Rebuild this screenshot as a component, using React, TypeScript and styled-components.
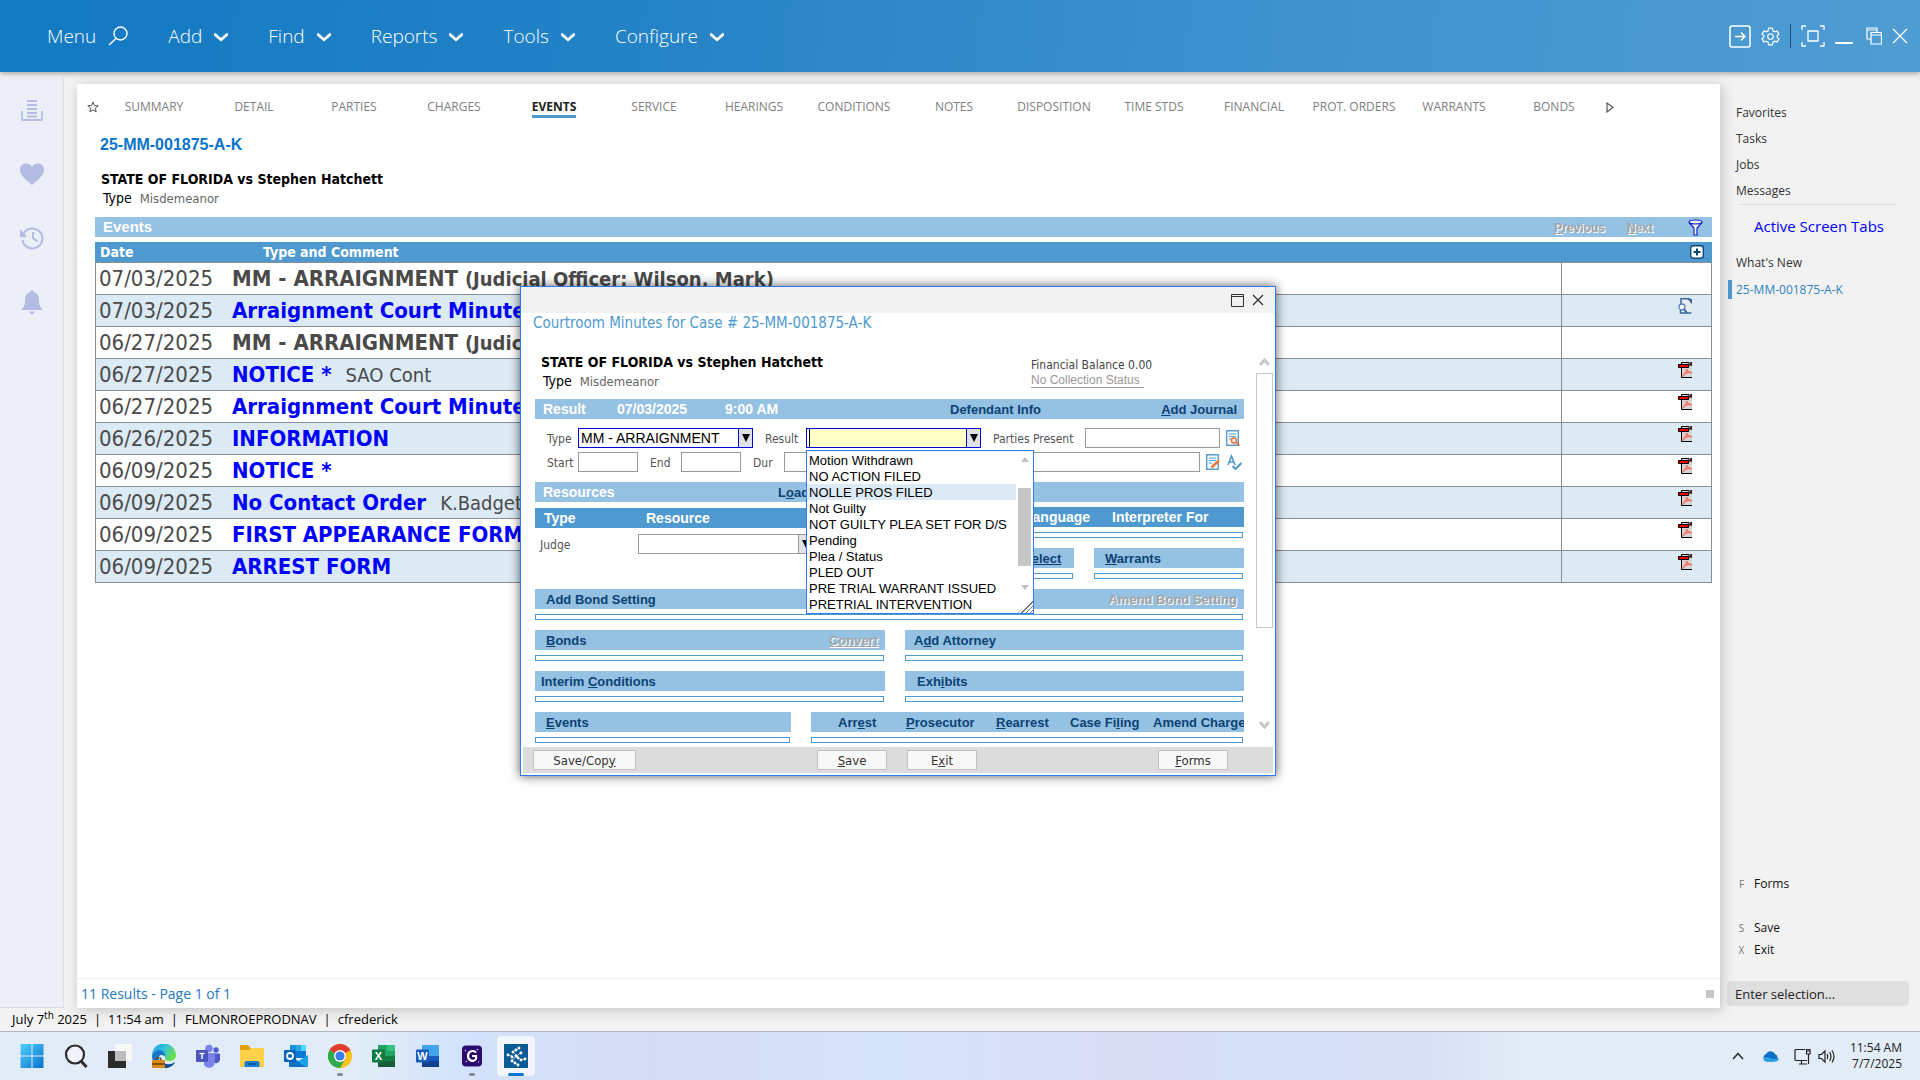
import React from "react";
import styled, { createGlobalStyle, css } from "styled-components";

const ui = `"Open Sans", "Noto Sans", sans-serif`;
const tahoma = `"DejaVu Sans Condensed", "DejaVu Sans", sans-serif`;
const arial = `"Liberation Sans", Arial, sans-serif`;

const GlobalStyle = createGlobalStyle`
  *, *::before, *::after { box-sizing: border-box; }
  body { margin: 0; background: #f2f2f2; font-family: ${ui}; font-size: 13px; color: #000; }
  button, input, select { font: inherit; margin: 0; border-radius: 0; }
  a { color: inherit; }
`;

/* ---------- shell ---------- */
const Shell = styled.div`
  min-height: 100vh;
  display: grid;
  grid-template-rows: 72px 1fr 24px 48px;
`;
const PlainButton = styled.button`
  display: inline-flex;
  align-items: center;
  justify-content: center;
  padding: 0;
  border: 0;
  background: none;
  color: inherit;
  cursor: pointer;
`;

/* ---------- top bar ---------- */
const TopBar = styled.header`
  position: relative;
  z-index: 1;
  display: flex;
  align-items: center;
  justify-content: space-between;
  padding: 0 12px 0 47px;
  color: #fff;
  background: linear-gradient(97deg, #1279c3 0%, #2583c7 35%, #2f88c9 45%, #4395d0 75%, #4f9cd2 100%);
  box-shadow: 0 2px 5px rgba(0, 0, 0, 0.3);
`;
const Nav = styled.nav`
  display: flex;
  gap: 40px;
`;
const NavItem = styled(PlainButton)`
  gap: 12px;
  font-size: 19px;
  font-weight: 300;
  line-height: 26px;
`;
const WindowTools = styled.div`
  display: flex;
  align-items: center;
  gap: 10px;
`;
const Divider = styled.span`
  width: 1px;
  height: 24px;
  background: #14548a;
`;

/* ---------- body ---------- */
const Body = styled.div`
  display: grid;
  grid-template-columns: 64px 1fr 200px;
`;
const Rail = styled.aside`
  margin-top: 6px;
  padding-top: 20px;
  display: flex;
  flex-direction: column;
  align-items: center;
  gap: 40px;
  background: #eceef8;
  border-right: 1px solid #dcdde2;
  border-bottom: 1px solid #dcdde2;
  color: #b5bce3;
`;
const Panel = styled.main`
  position: relative;
  display: flex;
  flex-direction: column;
  margin: 12px 0 0 13px;
  background: #fff;
  box-shadow: 2px 2px 12px rgba(0, 0, 0, 0.2);
`;
const Tabs = styled.nav`
  display: flex;
  align-items: center;
  height: 46px;
  padding-left: 4px;
  color: #808080;
`;
const TabEdge = styled(PlainButton)<{ $end?: boolean }>`
  width: ${(p) => (p.$end ? 12 : 23)}px;
  color: #555;
`;
const TabList = styled.div`
  display: flex;
  flex: 0 1 1500px;
`;
const Tab = styled(PlainButton)<{ $on?: boolean }>`
  flex: 1 1 0;
  min-width: 0;
  font-size: 12px;
  line-height: 16px;
  white-space: nowrap;
  font-weight: ${(p) => (p.$on ? 700 : 400)};
  color: ${(p) => (p.$on ? "#222" : "#808080")};
  span { border-bottom: 3px solid ${(p) => (p.$on ? "#4e9ad0" : "transparent")}; margin-top: 2px; }
`;
const CaseNumber = styled.h1`
  margin: 5px 0 0;
  padding-left: 23px;
  font: bold 16px/20px ${arial};
  color: #0a74cc;
`;
const Parties = styled.div<{ $pad: string }>`
  padding: ${(p) => p.$pad};
  font-family: ${tahoma};
  h2 { margin: 0; font: bold 14px/20px ${tahoma}; }
  p { margin: 0; padding-left: 2px; font-size: 14px; line-height: 18px; }
  p span { margin-left: 4px; font-size: 13px; color: #666; }
`;
const EventsBar = styled.div`
  display: flex;
  align-items: center;
  height: 20px;
  margin: 9px 8px 5px 18px;
  padding: 0 9px 0 8px;
  background: #95c1e2;
  color: #fff;
  h3 { flex: 1; margin: 0; font: bold 15px/20px ${arial}; }
`;
const Disabled = styled.a<{ $small?: boolean }>`
  font: bold ${(p) => (p.$small ? 12 : 13)}px/22px ${arial};
  color: #a5a5a5;
  text-decoration: none;
  text-shadow: 1px 1px 0 #fff;
`;
const Pager = styled.div`
  display: flex;
  gap: 22px;
  margin-right: 35px;
  height: 20px;
`;
const EventTable = styled.table`
  margin: 0 8px 0 18px;
  border-collapse: separate;
  border-spacing: 0;
  table-layout: fixed;
  font: 22px/28px ${tahoma};
  color: #4a4a4a;
  th {
    height: 21px;
    padding: 0 5px;
    background: #4e9ad0;
    border-bottom: 1px solid #8a8d92;
    font: bold 14px/20px ${tahoma};
    color: #fff;
    text-align: left;
  }
  th:nth-child(2) { padding-left: 35px; }
  th:last-child { text-align: right; line-height: 0; padding-right: 8px; }
  td {
    height: 32px;
    padding: 0 4px;
    border-bottom: 1px solid #8a8d92;
    white-space: nowrap;
  }
  td:nth-child(1) { border-left: 1px solid #8a8d92; padding-left: 3px; }
  td:nth-child(3) {
    border-left: 1px solid #8a8d92;
    border-right: 1px solid #8a8d92;
    vertical-align: top;
    text-align: right;
    line-height: 0;
    padding: 3px 19px 0 0;
  }
  tbody tr:nth-child(even) { background: #dceaf5; }
  b a { color: #0000ff; text-decoration: none; }
  b small { font-size: 20px; }
  td > span { margin-left: 14px; font-size: 20px; }
`;
const PanelFoot = styled.footer`
  display: flex;
  align-items: center;
  justify-content: space-between;
  height: 30px;
  margin-top: auto;
  padding: 0 6px 0 4px;
  border-top: 1px solid #efefef;
  font-size: 14px;
  color: #1e78c2;
`;
const Square = styled.span`
  width: 8px;
  height: 8px;
  background: #c6c6c6;
`;

/* ---------- right side ---------- */
const Side = styled.aside`
  display: flex;
  flex-direction: column;
  padding: 28px 11px 2px 7px;
  line-height: 26px;
  font-size: 12px;
  color: #333;
`;
const SideLink = styled.a<{ $on?: boolean }>`
  display: flex;
  align-items: center;
  height: 26px;
  padding-left: 9px;
  text-decoration: none;
  color: ${(p) => (p.$on ? "#2f83c5" : "#333")};
  ${(p) => p.$on && css`
    height: 19px;
    margin: 4px 0 0 1px;
    padding-left: 4px;
    border-left: 4px solid #4e9ad0;
  `}
`;
const SideTitle = styled.h2`
  margin: 0 12px 0 13px;
  padding: 7px 0 10px 14px;
  border-top: 1px solid #dedede;
  font: 15px/28px ${ui};
  color: #0000ff;
  white-space: nowrap;
`;
const Shortcut = styled(PlainButton)<{ $gap?: boolean }>`
  justify-content: flex-start;
  gap: 9px;
  height: 22px;
  padding-left: 11px;
  margin-bottom: ${(p) => (p.$gap ? "22px" : "0")};
  color: #111;
  kbd { width: 7px; font: 10px ${ui}; color: #777; }
`;
const Spacer = styled.div`
  flex: 1;
`;
const Selection = styled.input`
  width: 100%;
  height: 25px;
  margin: 20px 0 0;
  padding: 0 8px;
  border: 0;
  border-radius: 4px;
  background: #dfdfdf;
  font-size: 13px;
  &::placeholder { color: #222; opacity: 1; }
`;

/* ---------- status and task bars ---------- */
const Status = styled.div`
  display: flex;
  align-items: center;
  gap: 7px;
  padding: 0 0 2px 12px;
  font-size: 13px;
  line-height: 18px;
  border-bottom: 1px solid #adb8c4;
  sup { font-size: 10px; line-height: 0; }
`;
const TaskBar = styled.footer`
  display: flex;
  align-items: center;
  justify-content: space-between;
  padding: 0 18px 0 13px;
  background: linear-gradient(90deg, #e2ecf7 0%, #e0ecf8 19%, #d3e3fb 24%, #d6dbf6 35%, #d5e4fb 46%, #d9dcf4 60%, #d3e1f9 66%, #d9dff4 74%, #e0ecf7 79%, #e3edf7 100%);
`;
const Apps = styled.div`
  display: flex;
  gap: 6px;
`;
const AppButton = styled(PlainButton)<{ $state?: "open" | "active" }>`
  width: 38px;
  height: 40px;
  border-radius: 4px;
  flex-direction: column;
  padding-top: 8px;
  justify-content: flex-start;
  background: ${(p) => (p.$state === "active" ? "#f2f5fc" : "none")};
  svg { flex: none; margin-bottom: 5px; }
  &::after {
    content: "";
    width: ${(p) => (p.$state === "active" ? 16 : 6)}px;
    height: 3px;
    border-radius: 2px;
    background: ${(p) => (p.$state === "active" ? "#0a78d4" : p.$state ? "#868a92" : "transparent")};
  }
`;
const Tray = styled.div`
  display: flex;
  align-items: center;
  font-size: 12px;
  line-height: 16px;
  color: #222;
`;
const TrayIcon = styled(PlainButton)<{ $gap: number }>`
  margin-right: ${(p) => p.$gap}px;
`;
const Clock = styled.time`
  text-align: right;
`;

/* ---------- dialog ---------- */
const Overlay = styled.div`
  position: absolute;
  inset: 202px 1px auto 0;
  display: flex;
  justify-content: center;
`;
const Dialog = styled.section`
  width: 756px;
  background: #fff;
  border: 1px solid #2f7af0;
  box-shadow: 0 0 10px rgba(0, 0, 0, 0.65);
`;
const DialogTop = styled.div`
  display: flex;
  justify-content: flex-end;
  align-items: center;
  gap: 8px;
  height: 26px;
  padding-right: 11px;
  background: #f2f2f2;
  color: #333;
`;
const DialogBody = styled.div`
  display: flex;
  height: 434px;
  padding: 0 2px 0 14px;
`;
const Scroll = styled.div`
  flex: 1;
  min-width: 0;
  margin-right: 12px;
`;
const DialogTitle = styled.h2`
  margin: 0 0 0 -2px;
  font: 15px/20px ${tahoma};
  color: #4e9ad0;
`;
const DialogHead = styled.div`
  display: flex;
  justify-content: space-between;
  height: 66px;
`;
const Balance = styled.div`
  width: 213px;
  padding-top: 25px;
  font: 12px/15px ${tahoma};
  color: #444;
  a { display: inline-block; line-height: 13px; font-family: ${arial}; color: #999; text-decoration: none; border-bottom: 1px solid #999; padding-right: 4px; }
`;
const Bar = styled.div<{ $cols?: string; $dark?: boolean; $pad?: number; $size?: number }>`
  display: grid;
  grid-template-columns: ${(p) => p.$cols || "1fr auto"};
  height: 20px;
  padding-left: ${(p) => p.$pad ?? 11}px;
  padding-right: 7px;
  overflow: hidden;
  white-space: nowrap;
  background: ${(p) => (p.$dark ? "#4e9ad0" : "#95c1e2")};
  color: #fff;
  font: bold ${(p) => p.$size ?? 14}px/21px ${arial};
`;
const Action = styled.a`
  font-size: 13px;
  line-height: 22px;
  color: #0b4274;
  text-decoration: none;
`;
const EmptyGrid = styled.div`
  height: 6px;
  margin: 5px 1px 0 0;
  border: 1px solid #4e9ad0;
`;
const Form = styled.div`
  display: grid;
  gap: 4px;
  margin: 9px 0 10px;
`;
const Line = styled.div<{ $cols: string }>`
  display: grid;
  align-items: center;
  grid-template-columns: ${(p) => p.$cols};
  height: 20px;
`;
const Label = styled.label`
  padding: 2px 0 0 12px;
  font: 12px/18px ${tahoma};
  color: #555;
  white-space: nowrap;
`;
const Input = styled.input`
  width: 100%;
  height: 20px;
  padding: 0 3px;
  border: 1px solid #999;
  background: #fff;
`;
const Combo = styled.div<{ $hot?: boolean }>`
  position: relative;
  display: grid;
  grid-template-columns: 1fr 14px;
  height: 20px;
  border: 1px solid ${(p) => (p.$hot ? "#0000d8" : "#999")};
  background: #fff;
  select, input {
    appearance: none;
    width: 100%;
    min-width: 0;
    height: 18px;
    padding: 1px 2px 0;
    border: 0;
    outline: 0;
    background: #fff;
    font: 14px/17px ${arial};
    color: #000;
  }
`;
const Arrow = styled.button<{ $hot?: boolean }>`
  display: flex;
  align-items: center;
  justify-content: center;
  padding: 0;
  border: 0;
  border-left: 1px solid ${(p) => (p.$hot ? "#0000d8" : "#999")};
  background: #e1e2e8;
`;
const ResultInput = styled.input`
  && {
    background: #ffffc8;
    border-left: 2px solid #fff;
    box-shadow: inset 1px 0 0 #000;
  }
`;
const ListBox = styled.div`
  position: absolute;
  z-index: 2;
  top: 21px;
  left: -1px;
  width: 228px;
  height: 164px;
  display: flex;
  padding-top: 1px;
  background: #fff;
  border: 1px solid #2f7af0;
  ul { flex: 1; min-width: 0; margin: 0; padding: 0; list-style: none; }
`;
const Option = styled.li<{ $on?: boolean }>`
  height: 16px;
  padding-left: 2px;
  font: 13px/17px ${arial};
  white-space: nowrap;
  background: ${(p) => (p.$on ? "#dceaf5" : "none")};
`;
const ListScroll = styled.div`
  display: grid;
  grid-template-rows: 36px 78px 1fr;
  justify-items: center;
  width: 13px;
  margin: 0 2px;
  i { width: 13px; background: #c6c6c6; }
  svg { margin-top: 5px; }
  svg:last-child { margin-top: 19px; }
`;
const Grip = styled.span`
  position: absolute;
  right: 0;
  bottom: 0;
  width: 15px;
  height: 14px;
  background: repeating-linear-gradient(135deg, #777 0 1px, #fff 1px 3px);
  clip-path: polygon(100% 0, 100% 100%, 0 100%);
`;
const Split = styled.div<{ $cols: string; $gap?: number }>`
  display: grid;
  grid-template-columns: ${(p) => p.$cols};
  gap: ${(p) => p.$gap ?? 20}px;
  margin-bottom: 10px;
`;
const JudgeBlock = styled.div`
  display: grid;
  gap: 6px;
  align-content: start;
`;
const Column = styled.div`
  display: grid;
  align-content: start;
`;
const LanguageBlock = styled(Column)`
  margin: 5px 0 10px;
`;
const Subsections = styled.div`
  display: grid;
  grid-template-columns: 1fr 150px;
  gap: 20px;
`;
const ScrollBar = styled.div`
  display: flex;
  flex-direction: column;
  align-items: center;
  width: 17px;
  padding: 45px 0 18px;
`;
const Thumb = styled.span`
  width: 17px;
  height: 255px;
  margin: 7px 0 auto;
  border: 1px solid #c8c8c8;
  background: #fff;
`;
const DialogFoot = styled.footer`
  display: grid;
  grid-template-columns: 103px 1fr 70px 70px 1fr 70px;
  column-gap: 20px;
  align-items: center;
  height: 26px;
  margin: 0 2px 2px;
  padding: 0 45px 0 10px;
  background: #dcdcdc;
`;
const FootButton = styled.button<{ $col?: number }>`
  grid-column: ${(p) => p.$col ?? "auto"};
  height: 20px;
  padding: 1px 0 0;
  border: 1px solid #c0c0c0;
  background: #f8f8f8;
  font: 13px/16px ${tahoma};
  color: #333;
`;

/* ---------- drawings ---------- */
const Svg = (p: { w: number; h: number; vb?: string; sw?: number; fill?: string; children: React.ReactNode }) => (
  <svg width={p.w} height={p.h} viewBox={p.vb || `0 0 ${p.w} ${p.h}`} fill={p.fill || "none"}
    stroke={p.sw ? "currentColor" : "none"} strokeWidth={p.sw} aria-hidden="true">{p.children}</svg>
);
const Chevron = () => <Svg w={14} h={12} fill="#fff"><path d="M0 3.500 1.500 3 7 8l5.500-5 1.500.5v2L7 11.500l-7-6z" /></Svg>;
const Down = () => <Svg w={8} h={8} fill="#000"><path d="M0 0h8L4 8z" /></Svg>;
const PdfIcon = () => (
  <svg width="14" height="16" viewBox="0 0 14 16" aria-hidden="true">
    <path d="M3 0h8l3 3v13H3z" fill="#d4d4d4" />
    <path d="M14 15.500H3.500V.5H11v2.500h3" fill="none" stroke="#000" />
    <path d="M12.500 0H14v3h-1.500z" fill="#d00" stroke="#000" strokeWidth=".6" />
    <path d="M.5 2.500h10v3H.5z" fill="#f00000" stroke="#000" />
    <path d="M8.500 7c.6 2 1.500 3.300 5.500 4M8.500 7c0 3-2 6-4.500 7M5.500 12c2.500-1.500 5-2 8.500-1.500" fill="none" stroke="#ff6a5a" strokeWidth="1.200" />
  </svg>
);
const MinutesIcon = () => (
  <svg width="14" height="16" viewBox="0 0 14 16" aria-hidden="true">
    <path d="M3 1h8l2 3v11H4z" fill="#e6ebf4" />
    <path d="M3 6V.8h8M10.500 1l3 3.500V2L11 .8M2.500 12v3h11" fill="none" stroke="#3f679c" strokeWidth="1.500" />
    <circle cx="4" cy="9" r="3" fill="#f4f7fb" stroke="#5c83b5" strokeWidth="1.300" />
    <path d="m6 11 3 4" stroke="#3f679c" strokeWidth="2" />
  </svg>
);
const NoteIcon = (p: { find?: boolean }) => (
  <svg width="15" height="16" viewBox="0 0 15 16" fill="none" aria-hidden="true">
    <path d="M1.700.7h11.600v14.600H1.700z" stroke="#5a9fd0" strokeWidth="1.400" fill="#f3f9fd" />
    <path d="M4 4h7M4 6.500h7M4 9h3" stroke="#5a9fd0" />
    {p.find ? <g stroke="#e8743c" strokeWidth="1.600"><circle cx="9" cy="10.500" r="2.500" fill="#fff" /><path d="m11 12 3.500 3.500" /></g>
      : <path d="m6.500 13.500 7.500-7" stroke="#e8743c" strokeWidth="2.400" />}
  </svg>
);

/* Text with its keyboard letter between underscores. */
const U = (p: { t: string }) => {
  const [a, k, b] = p.t.split("_");
  return k === undefined ? <>{a}</> : <span>{a}<u>{k}</u>{b}</span>;
};

const OfficeIcon = (p: { letter: string; dark: string; mid: string; light: string; low: string }) => (
  <svg width="24" height="24" viewBox="0 0 24 24" aria-hidden="true">
    <path d="M6 1h9v6H6z" fill={p.mid} /><path d="M15 1h8v6h-8z" fill={p.light} />
    <path d="M6 7h17v5H6z" fill={p.mid} /><path d="M6 12h17v5H6z" fill={p.dark} /><path d="M6 17h17v6H6z" fill={p.low} />
    <rect y="5.500" width="13" height="13" rx="1" fill={p.dark} />
    <text x="6.500" y="15.800" textAnchor="middle" fontFamily="Liberation Sans, sans-serif" fontWeight="700" fontSize="11" fill="#fff">{p.letter}</text>
  </svg>
);

const apps: { name: string; state?: "open" | "active"; icon: React.ReactNode }[] = [
  { name: "Start", icon: <svg width="24" height="24" viewBox="0 0 24 24"><defs><linearGradient id="win" x2="1" y2="1"><stop stopColor="#4fd0fb" /><stop offset="1" stopColor="#0a72cf" /></linearGradient></defs><path d="M.5 0h11v11.500H.5zM12.500 0h11v11.500h-11zM.5 12.500h11V24H.5zM12.500 12.500h11V24h-11z" fill="url(#win)" /></svg> },
  { name: "Search", icon: <svg width="24" height="24" viewBox="0 0 24 24" fill="none" stroke="#2b2b2b" strokeWidth="2.200"><circle cx="11" cy="10.500" r="9" fill="#eff4fb" /><path d="m17 17 5.500 6" strokeWidth="3" /></svg> },
  { name: "Task view", icon: <svg width="24" height="24" viewBox="0 0 24 24"><path d="M0 7h18v17H0z" fill="#2c2c2c" /><path d="M7 0h17v17H7z" fill="#f8f8f8" /><path d="M7 7h11v10H7z" fill="#bdbdbd" /></svg> },
  { name: "Edge", icon: <svg width="24" height="24" viewBox="0 0 24 24"><defs><linearGradient id="edge" x2="1" y2=".5"><stop stopColor="#1c8ee0" /><stop offset=".5" stopColor="#2fc3df" /><stop offset="1" stopColor="#6be04e" /></linearGradient></defs><path d="M0 12A12 12 0 0 1 24 11c0 4-3 6-7 6-3 0-4-1-4-3 1-5-3-8-7-8-3 0-5 2-6 6z" fill="url(#edge)" /><path d="M0 12c1-4 4-6 7-6 4 0 7 3 6 7-1-2-5-3-6 0-1 4 3 8 9 8 3 0 5-1 7-3-2 4-6 6-11 6C5 24 0 19 0 12z" fill="#1277c8" /><path d="M9 13c-1 5 4 8 9 7 2 0 3-1 5-2-2 4-6 6-11 6-4-2-6-7-3-11z" fill="#0c4f95" /><rect y="16" width="13" height="8" rx="1" fill="#d88a1a" /><path d="M0 19h13v2H0z" fill="#8a4f06" /><path d="M4 16v-2h5v2" stroke="#7a4506" fill="none" /></svg> },
  { name: "Teams", icon: <svg width="24" height="24" viewBox="0 0 24 24"><circle cx="13" cy="4.500" r="3.800" fill="#7b83eb" /><circle cx="20" cy="6" r="2.700" fill="#5059c9" /><path d="M8 9h11v8a6 6 0 0 1-11 4z" fill="#7b83eb" /><path d="M19 9.500h5V15a4 4 0 0 1-5 4z" fill="#5059c9" /><rect y="6" width="12" height="12" rx="1" fill="#4b53bc" /><path d="M3.500 9.500h5M6 9.500V15" stroke="#fff" strokeWidth="1.500" /></svg> },
  { name: "File Explorer", icon: <svg width="24" height="24" viewBox="0 0 24 24"><path d="M0 2q0-1 1-1h7l2.500 3H24v8H0z" fill="#e0a010" /><path d="M0 6h9l2-2h13v18q0 1-1 1H1q-1 0-1-1z" fill="#ffd04a" /><path d="M4.500 23v-4q0-2 2-2h11q2 0 2 2v4z" fill="#1b7fd0" /><path d="M8 20h8" stroke="#0d5294" strokeWidth="1.500" /></svg> },
  { name: "Outlook", icon: <svg width="24" height="24" viewBox="0 0 24 24"><path d="M6 1h16v13H6z" fill="#1490df" /><path d="M12 1h5v6h-5z" fill="#28a8ea" /><path d="M17 1h5v6h-5z" fill="#50d9ff" /><path d="M12 7h10v7H12z" fill="#0f78d4" /><path d="M5 11l9.500 6L24 11v11q0 1-1 1H6q-1 0-1-1z" fill="#1da2ea" /><path d="M5 12l17 11H6q-1 0-1-1z" fill="#1272c2" /><rect y="6" width="12" height="12" rx="1" fill="#0364b8" /><circle cx="6" cy="12" r="3" fill="none" stroke="#fff" strokeWidth="1.800" /></svg> },
  { name: "Chrome", state: "open", icon: <svg width="24" height="24" viewBox="0 0 24 24"><circle cx="12" cy="12" r="12" fill="#fbc116" /><path d="M12 12 1.600 6A12 12 0 0 1 22.400 6z" fill="#e33b2e" /><path d="M12 12 1.600 6A12 12 0 0 0 12 24l5.200-9z" fill="#2da94f" /><circle cx="12" cy="12" r="6" fill="#fff" /><circle cx="12" cy="12" r="4.600" fill="#3b7ded" /></svg> },
  { name: "Excel", icon: <OfficeIcon letter="X" dark="#107c41" mid="#21a366" light="#33c481" low="#185c37" /> },
  { name: "Word", icon: <OfficeIcon letter="W" dark="#185abd" mid="#41a5ee" light="#41a5ee" low="#103f91" /> },
  { name: "Capture", state: "open", icon: <svg width="24" height="24" viewBox="0 0 24 24"><rect x="2" y="1.500" width="20" height="21" rx="4" fill="#2c0a6e" /><path d="M16 8.500c-2-2.500-8-2-8 3.500s6 6 8 3v-3h-4" fill="none" stroke="#fff" strokeWidth="2.200" /><path d="M5 6l1 1M18 5l-1 1M6 18l1-1M18 18h1" stroke="#c9a6ff" strokeWidth="1.500" /></svg> },
  { name: "Court case manager", state: "active", icon: <svg width="24" height="24" viewBox="0 0 24 24"><path d="M0 0h24v24H0z" fill="#0a5a96" /><g stroke="#fff" strokeWidth=".7" fill="#fff"><path fill="none" d="M15 4 9 8l4 4 4-4M4 11l4 1M12 12l-4 5 6 4M13 12l4 4 4-1M17 8v2" />{[[15, 4], [12, 6], [9, 8], [17, 9], [12, 12], [4, 11], [8, 13], [8, 17], [11, 19], [14, 21], [17, 16], [21, 15], [14, 14]].map(([x, y]) => <circle key={`${x}-${y}`} cx={x} cy={y} r="1.400" stroke="none" />)}</g></svg> },
];

const tabs = ["SUMMARY", "DETAIL", "PARTIES", "CHARGES", "EVENTS", "SERVICE", "HEARINGS", "CONDITIONS", "NOTES", "DISPOSITION", "TIME STDS", "FINANCIAL", "PROT. ORDERS", "WARRANTS", "BONDS"];

const events: { date: string; title: string; officer?: string; note?: string; icon?: "pdf" | "minutes" }[] = [
  { date: "07/03/2025", title: "MM - ARRAIGNMENT", officer: "(Judicial Officer: Wilson, Mark)" },
  { date: "07/03/2025", title: "Arraignment Court Minutes", icon: "minutes" },
  { date: "06/27/2025", title: "MM - ARRAIGNMENT", officer: "(Judicial Officer: Wilson, Mark)" },
  { date: "06/27/2025", title: "NOTICE *", note: "SAO Cont", icon: "pdf" },
  { date: "06/27/2025", title: "Arraignment Court Minutes", icon: "pdf" },
  { date: "06/26/2025", title: "INFORMATION", icon: "pdf" },
  { date: "06/09/2025", title: "NOTICE *", icon: "pdf" },
  { date: "06/09/2025", title: "No Contact Order", note: "K.Badgett", icon: "pdf" },
  { date: "06/09/2025", title: "FIRST APPEARANCE FORM", icon: "pdf" },
  { date: "06/09/2025", title: "ARREST FORM", icon: "pdf" },
];

const results = ["Motion Withdrawn", "NO ACTION FILED", "NOLLE PROS FILED", "Not Guilty", "NOT GUILTY PLEA SET FOR D/S", "Pending", "Plea / Status", "PLED OUT", "PRE TRIAL WARRANT ISSUED", "PRETRIAL INTERVENTION"];

function Section(p: { pad?: number; cols?: string; items: string[]; off?: string }) {
  return (
    <Column>
      <Bar $pad={p.pad} $cols={p.cols} $size={13}>
        {p.items.map((t) => <Action href="#" key={t}><U t={t} /></Action>)}
        {p.off && <Disabled href="#"><U t={p.off} /></Disabled>}
      </Bar>
      <EmptyGrid />
    </Column>
  );
}

function CourtroomDialog() {
  return (
    <Overlay>
      <Dialog role="dialog" aria-label="Courtroom Minutes">
        <DialogTop>
          <PlainButton aria-label="Maximize"><Svg w={13} h={13} sw={1}><path d="M.5.5h12v12H.5zM.5 2.500h12" /></Svg></PlainButton>
          <PlainButton aria-label="Close"><Svg w={12} h={12} sw={1.3}><path d="m1 1 10 10M11 1 1 11" /></Svg></PlainButton>
        </DialogTop>
        <DialogBody>
          <Scroll>
            <DialogTitle>Courtroom Minutes for Case # 25-MM-001875-A-K</DialogTitle>
            <DialogHead>
              <Parties $pad="19px 0 0 6px">
                <h2>STATE OF FLORIDA vs Stephen Hatchett</h2>
                <p>Type <span>Misdemeanor</span></p>
              </Parties>
              <Balance>Financial Balance 0.00<br /><a href="#">No Collection Status</a></Balance>
            </DialogHead>
            <Bar $cols="74px 108px 225px 1fr auto" $pad={8}>
              <span>Result</span><span>07/03/2025</span><span>9:00 AM</span>
              <Action href="#">Defendant Info</Action><Action href="#"><U t="_A_dd Journal" /></Action>
            </Bar>
            <Form>
              <Line $cols="43px 175px 53px 175px 104px 1fr 24px">
                <Label htmlFor="type">Type</Label>
                <Combo $hot>
                  <select id="type" defaultValue="a"><option value="a">MM - ARRAIGNMENT</option></select>
                  <Arrow $hot aria-label="Open type list"><Down /></Arrow>
                </Combo>
                <Label htmlFor="result">Result</Label>
                <Combo $hot>
                  <ResultInput id="result" role="combobox" aria-expanded="true" aria-controls="result-list" />
                  <Arrow $hot aria-label="Open result list"><Down /></Arrow>
                  <ListBox>
                    <ul id="result-list" role="listbox">
                      {results.map((r, i) => <Option role="option" aria-selected={i === 2} $on={i === 2} key={r}>{r}</Option>)}
                    </ul>
                    <ListScroll>
                      <Svg w={8} h={5} fill="#c0c0c0"><path d="M0 5h8L4 0z" /></Svg>
                      <i />
                      <Svg w={8} h={5} fill="#c0c0c0"><path d="M0 0h8L4 5z" /></Svg>
                    </ListScroll>
                    <Grip />
                  </ListBox>
                </Combo>
                <Label htmlFor="parties">Parties Present</Label>
                <Input id="parties" />
                <PlainButton aria-label="Find parties"><NoteIcon find /></PlainButton>
              </Line>
              <Line $cols="43px 60px 43px 60px 43px 60px 1fr 24px 20px">
                <Label htmlFor="start">Start</Label><Input id="start" />
                <Label htmlFor="end">End</Label><Input id="end" />
                <Label htmlFor="dur">Dur</Label><Input id="dur" />
                <Input aria-label="Comment" />
                <PlainButton aria-label="Edit comment"><NoteIcon /></PlainButton>
                <PlainButton aria-label="Check spelling">
                  <Svg w={15} h={16} sw={1.6}><g stroke="#4e9ad0"><path d="M1 11 4.500 2 8 11M2.500 8h4" /><path d="m5.500 12 3 3 6-6" strokeWidth="2" /></g></Svg>
                </PlainButton>
              </Line>
            </Form>
            <Split $cols="285px 1fr" $gap={0}>
              <JudgeBlock>
                <Bar $pad={8} $cols="235px 1fr"><span>Resources</span><Action href="#"><U t="L_o_ad" /></Action></Bar>
                <Bar $pad={9} $dark $cols="102px 1fr"><span>Type</span><span>Resource</span></Bar>
                <Line $cols="103px 175px">
                  <JudgeLabel htmlFor="judge">Judge</JudgeLabel>
                  <Combo><input id="judge" /><Arrow aria-label="Open judge list"><Down /></Arrow></Combo>
                </Line>
              </JudgeBlock>
              <Column>
                <Bar />
                <LanguageBlock>
                  <Bar $dark $pad={204} $cols="88px 1fr"><span>Language</span><span>Interpreter For</span></Bar>
                  <EmptyGrid />
                </LanguageBlock>
                <Subsections>
                  <Section cols="1fr" pad={203} items={["_Select_"]} />
                  <Section items={["_W_arrants"]} />
                </Subsections>
              </Column>
            </Split>
            <Split $cols="1fr"><Section items={["Add Bond Setting"]} off="Amend Bond Setting" /></Split>
            <Split $cols="350px 1fr"><Section items={["_B_onds"]} off="_Convert_" /><Section pad={9} items={["A_d_d Attorney"]} /></Split>
            <Split $cols="350px 1fr"><Section pad={6} items={["Interim _C_onditions"]} /><Section pad={12} items={["Exh_i_bits"]} /></Split>
            <Split $cols="256px 1fr">
              <Section items={["_E_vents"]} />
              <Section pad={27} cols="68px 90px 74px 83px 100px" items={["Arr_e_st", "_P_rosecutor", "_R_earrest", "Case Fi_l_ing", "Amend Char_g_e"]} />
            </Split>
          </Scroll>
          <ScrollBar aria-hidden="true">
            <Svg w={11} h={8} sw={3}><path d="M1 7l4.500-5L10 7" stroke="#c8c8c8" /></Svg>
            <Thumb />
            <Svg w={11} h={8} sw={3}><path d="M1 1l4.500 5L10 1" stroke="#c8c8c8" /></Svg>
          </ScrollBar>
        </DialogBody>
        <DialogFoot>
          <FootButton>Save/Cop<u>y</u></FootButton>
          <FootButton $col={3}><u>S</u>ave</FootButton>
          <FootButton>E<u>x</u>it</FootButton>
          <FootButton $col={6}><u>F</u>orms</FootButton>
        </DialogFoot>
      </Dialog>
    </Overlay>
  );
}

const JudgeLabel = styled(Label)`
  padding-left: 5px;
`;

export default function App() {
  return (
    <>
      <GlobalStyle />
      <Shell>
        <TopBar>
          <Nav>
            <NavItem>Menu <Svg w={20} h={20} sw={1.4}><circle cx="12.500" cy="7.500" r="6.500" /><path d="M8 12.500 1 19" /></Svg></NavItem>
            {["Add", "Find", "Reports", "Tools", "Configure"].map((n) => <NavItem key={n}>{n} <Chevron /></NavItem>)}
          </Nav>
          <WindowTools>
            <PlainButton aria-label="Sign out"><Svg w={22} h={23} sw={1.5}><rect x="1" y="1" width="20" height="21" rx="2" /><path d="M6 11.500h10M12 7.500l4 4-4 4" /></Svg></PlainButton>
            <PlainButton aria-label="Settings"><Svg w={19} h={19} vb="0 0 24 24" sw={1.5}><circle cx="12" cy="12" r="3.500" /><path d="M9.600 1.500h4.800l.7 3.300 2 1.200 3.200-1.100 2.400 4.200-2.500 2.200v1.400l2.500 2.200-2.400 4.200-3.200-1.100-2 1.200-.7 3.300H9.600l-.7-3.300-2-1.200-3.200 1.100-2.400-4.200 2.500-2.200v-1.400L1.300 9.100l2.400-4.200L6.900 6l2-1.200z" /></Svg></PlainButton>
            <Divider />
            <PlainButton aria-label="Focus"><Svg w={24} h={22} sw={1.3}><path d="M1 5V1h4M19 1h4v4M23 17v4h-4M5 21H1v-4M7 6h10v10H7z" /></Svg></PlainButton>
            <PlainButton aria-label="Minimize"><Svg w={18} h={20} sw={2}><path d="M0 17h18" /></Svg></PlainButton>
            <PlainButton aria-label="Restore"><Svg w={19} h={18} sw={1.2}><path d="M8 12H4V1h10v4M4 3h10M8 5.500h10.500v11.500H8zM8 8h10.500" /></Svg></PlainButton>
            <PlainButton aria-label="Close"><Svg w={16} h={16} sw={1.3}><path d="m1 1 14 14M15 1 1 15" /></Svg></PlainButton>
          </WindowTools>
        </TopBar>
        <Body>
          <Rail>
            <PlainButton aria-label="Cases"><Svg w={24} h={24} sw={2}><path d="M2 13v8q0 1 1 1h18q1 0 1-1v-8M7 3h10M7 7h10M7 11h10M7 15h10M7 18.500h10" strokeWidth="1.800" /></Svg></PlainButton>
            <PlainButton aria-label="Favorites"><Svg w={24} h={24} fill="#b5bce3"><path d="M12 23C4 16 0 13 0 7.500 0 4 2.500 1.500 6 1.500c2.500 0 4.500 1 6 3.500 1.500-2.500 3.500-3.500 6-3.500 3.500 0 6 2.500 6 6C24 13 20 16 12 23z" /></Svg></PlainButton>
            <PlainButton aria-label="History"><Svg w={24} h={24} sw={2}><path d="M3 9a10 10 0 1 1-.5 5M13 6v6l4.500 3.500" /><path d="M0 3v8h7z" fill="#b5bce3" stroke="none" /></Svg></PlainButton>
            <PlainButton aria-label="Alerts"><Svg w={20} h={24} fill="#b5bce3"><path d="M10 0c1 0 1.500 1 1.500 2C15.500 3 17 6.500 17 10c0 5 1 7 3 9v1H0v-1c2-2 3-4 3-9 0-3.500 1.500-7 5.500-8 0-1 .5-2 1.500-2zM7.500 21.500h5a2.500 2.500 0 0 1-5 0z" /></Svg></PlainButton>
          </Rail>
          <Panel>
            <Tabs>
              <TabEdge aria-label="Favorite"><Svg w={12} h={12} vb="0 0 24 24" sw={2}><path d="m12 2 2.800 7.200 7.700.4-6 4.800 2 7.500-6.500-4.200-6.500 4.200 2-7.500-6-4.800 7.700-.4z" /></Svg></TabEdge>
              <TabList>{tabs.map((t) => <Tab key={t} $on={t === "EVENTS"}><span>{t}</span></Tab>)}</TabList>
              <TabEdge $end aria-label="More tabs"><Svg w={8} h={11} sw={1.2}><path d="M1 1v9l6-4.500z" /></Svg></TabEdge>
            </Tabs>
            <CaseNumber>25-MM-001875-A-K</CaseNumber>
            <Parties $pad="14px 0 0 24px">
              <h2>STATE OF FLORIDA vs Stephen Hatchett</h2>
              <p>Type <span>Misdemeanor</span></p>
            </Parties>
            <EventsBar>
              <h3>Events</h3>
              <Pager><Disabled $small href="#"><U t="_P_revious" /></Disabled><Disabled $small href="#"><U t="_N_ext" /></Disabled></Pager>
              <PlainButton aria-label="Filter"><Svg w={15} h={17} sw={1.2}><g stroke="#0a20c8"><path d="M1 3.500 6 9v7h3V9l5-5.500" fill="#fff" /><ellipse cx="7.500" cy="3" rx="6.500" ry="2" fill="#e8f2fb" /></g></Svg></PlainButton>
            </EventsBar>
            <EventTable>
              <colgroup><col width="133" /><col /><col width="151" /></colgroup>
              <thead>
                <tr>
                  <th>Date</th><th>Type and Comment</th>
                  <th><PlainButton aria-label="Add event"><Svg w={14} h={14} fill="#fff"><rect x=".7" y=".7" width="12.600" height="12.600" rx="2.500" stroke="#0b4a7c" strokeWidth="1.400" /><path d="M7 3.500v7M3.500 7h7" stroke="#0b4274" strokeWidth="2" /></Svg></PlainButton></th>
                </tr>
              </thead>
              <tbody>
                {events.map((e, i) => (
                  <tr key={i}>
                    <td>{e.date}</td>
                    <td><b>{e.officer ? <>{e.title} <small>{e.officer}</small></> : <a href="#">{e.title}</a>}</b>{e.note && <span>{e.note}</span>}</td>
                    <td>{e.icon === "pdf" ? <PdfIcon /> : e.icon ? <MinutesIcon /> : null}</td>
                  </tr>
                ))}
              </tbody>
            </EventTable>
            <PanelFoot><span>11 Results - Page 1 of 1</span><Square /></PanelFoot>
            <CourtroomDialog />
          </Panel>
          <Side>
            <SideLink href="#">Favorites</SideLink>
            <SideLink href="#">Tasks</SideLink>
            <SideLink href="#">Jobs</SideLink>
            <SideLink href="#">Messages</SideLink>
            <SideTitle>Active Screen Tabs</SideTitle>
            <SideLink href="#">What's New</SideLink>
            <SideLink href="#" $on>25-MM-001875-A-K</SideLink>
            <Spacer />
            <Shortcut $gap><kbd>F</kbd>Forms</Shortcut>
            <Shortcut><kbd>S</kbd>Save</Shortcut>
            <Shortcut><kbd>X</kbd>Exit</Shortcut>
            <Selection aria-label="Selection" placeholder="Enter selection..." />
          </Side>
        </Body>
        <Status>
          <span>July 7<sup>th</sup> 2025</span><span>|</span><span>11:54 am</span><span>|</span><span>FLMONROEPRODNAV</span><span>|</span><span>cfrederick</span>
        </Status>
        <TaskBar>
          <Apps>{apps.map((a) => <AppButton key={a.name} aria-label={a.name} $state={a.state}>{a.icon}</AppButton>)}</Apps>
          <Tray>
            <TrayIcon aria-label="Show hidden icons" $gap={18}><Svg w={12} h={8} sw={1.5}><path d="m1 7 5-5.500L11 7" /></Svg></TrayIcon>
            <TrayIcon aria-label="OneDrive" $gap={15}><Svg w={17} h={12}><path d="M4 11.500a4 4 0 0 1 0-7.500 5 5 0 0 1 9 0 4 4 0 0 1 0 7.500z" fill="#0a6cc4" /><path d="M2 7.500q3-1 6 0.500t8.500 0Q17 11.500 13 11.500H4Q1 11 2 7.500z" fill="#28a0e8" /></Svg></TrayIcon>
            <TrayIcon aria-label="Network" $gap={7}><Svg w={17} h={17} sw={1.2}><path d="M11 1.500H2q-1 0-1 1v9q0 1 1 1h11M5 16h8M7.500 12.500V16M14.500 6v10M12.500 1.500h3.500V6h-3.500zM12.500 3h3.500" /></Svg></TrayIcon>
            <TrayIcon aria-label="Volume" $gap={15}><Svg w={17} h={15} sw={1.2}><path d="M1 5.500v4h2.500L7 13V2L3.500 5.500zM9 5q1.500 2.500 0 5M11.500 3q3 4.500 0 9M14 1.500q4 6 0 12" /></Svg></TrayIcon>
            <Clock>11:54 AM<br />7/7/2025</Clock>
          </Tray>
        </TaskBar>
      </Shell>
    </>
  );
}
